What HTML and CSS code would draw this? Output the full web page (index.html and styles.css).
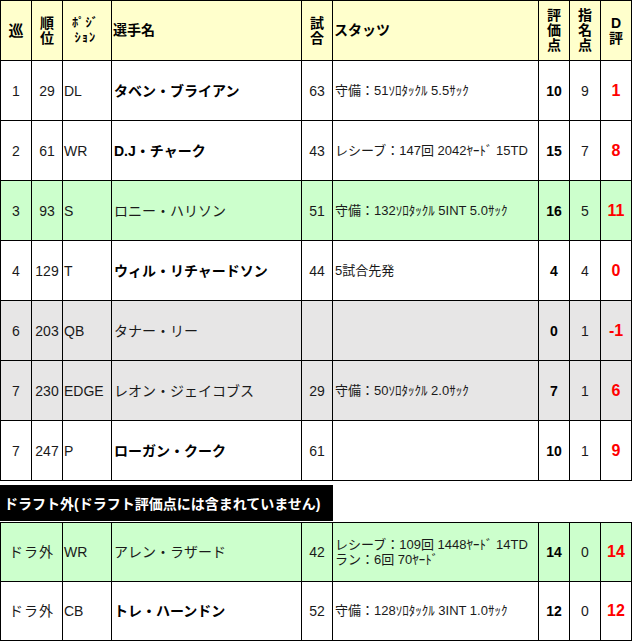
FILE: index.html
```html
<!DOCTYPE html>
<html lang="ja">
<head>
<meta charset="utf-8">
<title>ドラフト評価</title>
<link rel="stylesheet" href="styles.css">
</head>
<body>
<table class="grid main">
  <colgroup>
    <col class="c1"><col class="c2"><col class="c3"><col class="c4"><col class="c5"><col class="c6"><col class="c7"><col class="c8"><col class="c9">
  </colgroup>
  <thead>
    <tr class="head">
      <th class="first big">巡</th>
      <th>順<br>位</th>
      <th class="posh">ﾎﾟｼﾞ<br>ｼｮﾝ</th>
      <th class="left">選手名</th>
      <th>試<br>合</th>
      <th class="left stath">スタッツ</th>
      <th>評<br>価<br>点</th>
      <th>指<br>名<br>点</th>
      <th>D<br>評</th>
    </tr>
  </thead>
  <tbody>
    <tr>
      <td class="first ctr">1</td><td class="ctr">29</td><td class="pos">DL</td><td class="name b">タベン・ブライアン</td><td class="ctr">63</td><td class="stats">守備：51ｿﾛﾀｯｸﾙ 5.5ｻｯｸ</td><td class="ctr b">10</td><td class="ctr">9</td><td class="ctr d">1</td>
    </tr>
    <tr>
      <td class="first ctr">2</td><td class="ctr">61</td><td class="pos">WR</td><td class="name b">D.J・チャーク</td><td class="ctr">43</td><td class="stats">レシーブ：147回 2042ﾔｰﾄﾞ 15TD</td><td class="ctr b">15</td><td class="ctr">7</td><td class="ctr d">8</td>
    </tr>
    <tr class="green">
      <td class="first ctr">3</td><td class="ctr">93</td><td class="pos">S</td><td class="name">ロニー・ハリソン</td><td class="ctr">51</td><td class="stats">守備：132ｿﾛﾀｯｸﾙ 5INT 5.0ｻｯｸ</td><td class="ctr b">16</td><td class="ctr">5</td><td class="ctr d">11</td>
    </tr>
    <tr>
      <td class="first ctr">4</td><td class="ctr">129</td><td class="pos">T</td><td class="name b">ウィル・リチャードソン</td><td class="ctr">44</td><td class="stats">5試合先発</td><td class="ctr b">4</td><td class="ctr">4</td><td class="ctr d">0</td>
    </tr>
    <tr class="gray">
      <td class="first ctr">6</td><td class="ctr">203</td><td class="pos">QB</td><td class="name">タナー・リー</td><td class="ctr"></td><td class="stats"></td><td class="ctr b">0</td><td class="ctr">1</td><td class="ctr d">-1</td>
    </tr>
    <tr class="gray">
      <td class="first ctr">7</td><td class="ctr">230</td><td class="pos">EDGE</td><td class="name">レオン・ジェイコブス</td><td class="ctr">29</td><td class="stats">守備：50ｿﾛﾀｯｸﾙ 2.0ｻｯｸ</td><td class="ctr b">7</td><td class="ctr">1</td><td class="ctr d">6</td>
    </tr>
    <tr>
      <td class="first ctr">7</td><td class="ctr">247</td><td class="pos">P</td><td class="name b">ローガン・クーク</td><td class="ctr">61</td><td class="stats"></td><td class="ctr b">10</td><td class="ctr">1</td><td class="ctr d">9</td>
    </tr>
  </tbody>
</table>

<div class="banner">ドラフト外(ドラフト評価点には含まれていません)</div>

<table class="grid extra">
  <colgroup>
    <col class="c1"><col class="c2"><col class="c3"><col class="c4"><col class="c5"><col class="c6"><col class="c7"><col class="c8"><col class="c9">
  </colgroup>
  <tbody>
    <tr class="green top">
      <td class="first ctr spaced" colspan="2">ドラ外</td><td class="pos">WR</td><td class="name">アレン・ラザード</td><td class="ctr">42</td><td class="stats two">レシーブ：109回 1448ﾔｰﾄﾞ 14TD<br>ラン：6回 70ﾔｰﾄﾞ</td><td class="ctr b">14</td><td class="ctr">0</td><td class="ctr d">14</td>
    </tr>
    <tr class="short">
      <td class="first ctr spaced" colspan="2">ドラ外</td><td class="pos">CB</td><td class="name b">トレ・ハーンドン</td><td class="ctr">52</td><td class="stats">守備：128ｿﾛﾀｯｸﾙ 3INT 1.0ｻｯｸ</td><td class="ctr b">12</td><td class="ctr">0</td><td class="ctr d">12</td>
    </tr>
  </tbody>
</table>
</body>
</html>
```

FILE: styles.css
```css
html, body {
  margin: 0;
  padding: 0;
  background: #ffffff;
}

body {
  font-family: "Liberation Sans", "Noto Sans CJK JP", sans-serif;
  font-size: 14px;
  color: #1a1a1a;
}

.grid {
  table-layout: fixed;
  border-collapse: separate;
  border-spacing: 0;
  width: 632px;
}

.c1 { width: 32px; }
.c2 { width: 31px; }
.c3 { width: 49px; }
.c4 { width: 190px; }
.c5 { width: 31px; }
.c6 { width: 206px; }
.c7 { width: 31px; }
.c8 { width: 31px; }
.c9 { width: 31px; }

.grid th,
.grid td {
  box-sizing: border-box;
  border-right: 1px solid #000;
  border-bottom: 1px solid #000;
  padding: 0;
  vertical-align: middle;
  white-space: nowrap;
  overflow: hidden;
}

.grid .first {
  border-left: 1px solid #000;
}

/* header */
.head th {
  background: #ffffcc;
  border-top: 1px solid #000;
  height: 61px;
  font-weight: bold;
  font-size: 14px;
  line-height: 15px;
  text-align: center;
  color: #000;
}

.head th.big {
  font-size: 15px;
}

.head th.left {
  text-align: left;
  padding-left: 1px;
}

.head th.posh {
  font-size: 12.5px;
  line-height: 15px;
  letter-spacing: 1px;
  padding-right: 3px;
}

/* body rows */
.grid td {
  height: 60px;
  line-height: 16px;
}

.grid tr.green td { background: #ccffcc; }
.grid tr.gray td { background: #e7e6e6; }

.ctr { text-align: center; }

.spaced {
  letter-spacing: 1px;
}

.pos {
  padding-left: 1px !important;
  text-align: left;
}

.name {
  padding-left: 2px !important;
  text-align: left;
}

.stats {
  padding-left: 2px !important;
  text-align: left;
  font-size: 13px;
}

.stats.two {
  line-height: 15px;
}

.b {
  font-weight: bold;
  color: #000;
}

.d {
  color: #ff0000;
  font-weight: bold;
  font-size: 16px;
}

/* banner */
.banner {
  box-sizing: border-box;
  width: 333px;
  height: 36px;
  margin-top: 4px;
  margin-bottom: 1px;
  padding-left: 4px;
  background: #000;
  color: #fff;
  font-weight: bold;
  font-size: 14px;
  display: flex;
  align-items: center;
  white-space: nowrap;
}

/* draft-out table */
.extra tr.top td {
  border-top: 1px solid #000;
  height: 60px;
}

.extra tr.short td {
  height: 59px;
}
```
